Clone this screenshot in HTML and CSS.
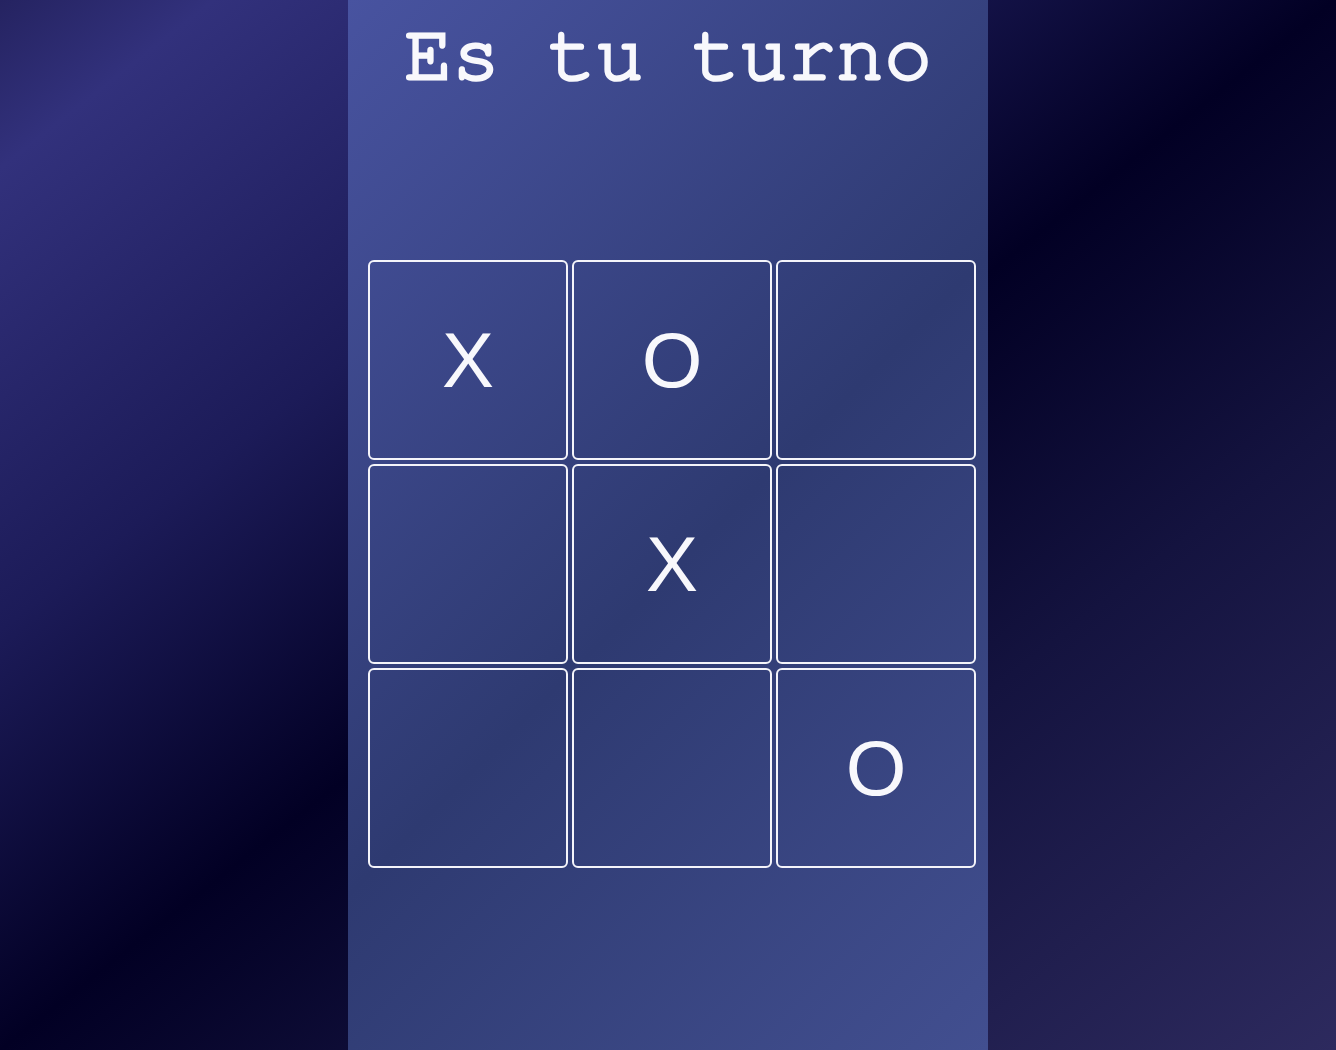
FILE: index.html
```html
<!DOCTYPE html>
<html lang="es">
<head>
<meta charset="utf-8">
<title>Tres en raya</title>
<link rel="stylesheet" href="styles.css">
</head>
<body>
<main class="game">
  <h1 class="status">Es tu turno</h1>
  <div class="board">
    <div class="cell">X</div>
    <div class="cell">O</div>
    <div class="cell"></div>
    <div class="cell"></div>
    <div class="cell">X</div>
    <div class="cell"></div>
    <div class="cell"></div>
    <div class="cell"></div>
    <div class="cell">O</div>
  </div>
</main>
</body>
</html>
```
FILE: styles.css
```css
html, body {
  margin: 0;
  height: 100%;
}

body {
  display: flex;
  justify-content: center;
  background: linear-gradient(to bottom right,
    #252361 0%,
    #32317c 8%,
    #1c1b58 30%,
    #020024 50%,
    #14133f 70%,
    #2d2a5e 100%);
  font-family: "Liberation Sans", Arial, sans-serif;
}

.game {
  width: 640px;
  min-height: 100%;
  box-sizing: border-box;
  padding: 14px 0 0 20px;
  background: linear-gradient(135deg,
    #4853a0 0%,
    #2e3a71 53%,
    #424f90 100%);
}

.status {
  margin: 0 0 0 -20px;
  height: 90px;
  font-family: "FreeMono", "Liberation Mono", monospace;
  font-weight: normal;
  -webkit-text-stroke: 3px #f8f8fc;
  font-size: 80px;
  line-height: 83px;
  color: #f8f8fc;
  text-align: center;
}

.board {
  margin-top: 156px;
  display: grid;
  grid-template-columns: repeat(3, 200px);
  grid-auto-rows: 200px;
  gap: 4px;
}

.cell {
  box-sizing: border-box;
  border: 2px solid #f4f4fa;
  border-radius: 6px;
  display: flex;
  align-items: center;
  justify-content: center;
  font-size: 78px;
  color: #f8f8fc;
}
```
